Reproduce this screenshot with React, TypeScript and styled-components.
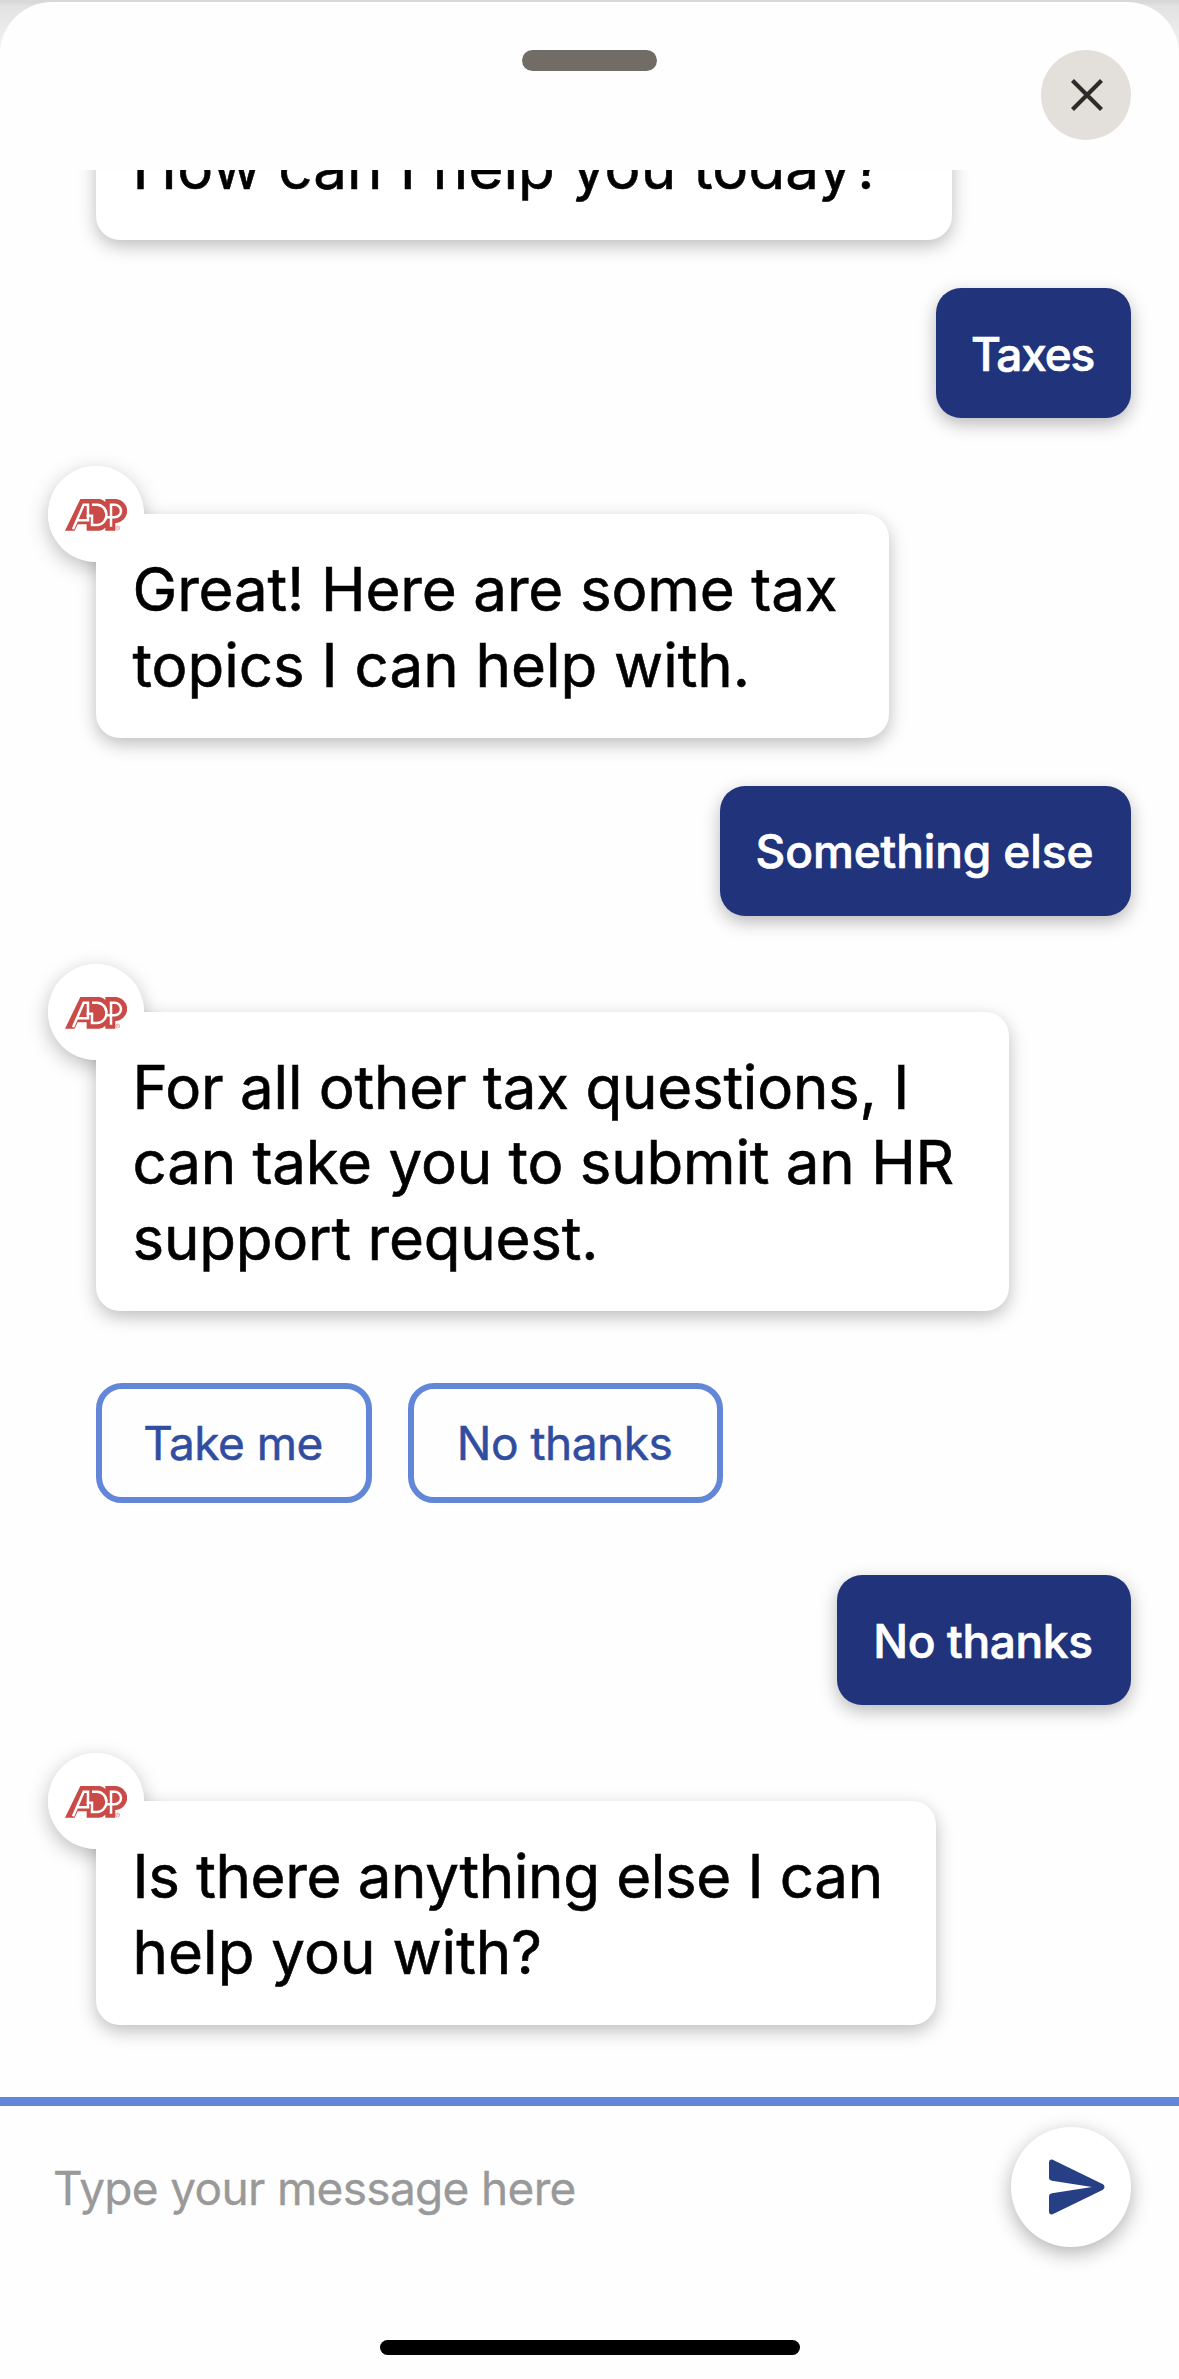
import React from 'react';
import styled, { createGlobalStyle } from 'styled-components';

const GlobalStyle = createGlobalStyle`
  *, *::before, *::after { box-sizing: border-box; }
  body { margin: 0; background: #fefefe; }
  button, input { font: inherit; margin: 0; }
`;

const Screen = styled.div`
  width: 1179px;
  height: 2379px;
  padding-top: 2px;
  overflow: hidden;
  background: linear-gradient(#d8d8d8 0, #d8d8d8 2px, #e2e2e2 6px, #f6f6f6 60px, #fefefe 90px);
  font-family: Inter, "Liberation Sans", sans-serif;
  color: #000;
`;

const Sheet = styled.main`
  display: flex;
  flex-direction: column;
  height: 2377px;
  border-radius: 52px 52px 0 0;
  background: #fefefe;
  overflow: hidden;
`;

const Header = styled.header`
  display: grid;
  grid-template-columns: 1fr 135px 1fr;
  align-items: start;
  flex: none;
  height: 168px;
  padding: 48px 48px 0;
`;

const Grabber = styled.div`
  grid-column: 2;
  height: 21px;
  border-radius: 11px;
  background: #716d66;
`;

const CloseButton = styled.button`
  display: flex;
  align-items: center;
  justify-content: center;
  justify-self: end;
  width: 90px;
  height: 90px;
  padding: 0 0 0 1px;
  border: 0;
  border-radius: 50%;
  background: #e3e0db;
`;

const Messages = styled.section`
  display: flex;
  flex-direction: column;
  justify-content: flex-end;
  flex: none;
  height: 1927px;
  padding: 0 48px 72px;
  overflow: hidden;
`;

const BotMessage = styled.div<{ $width: number }>`
  position: relative;
  align-self: flex-start;
  flex: none;
  width: ${(p) => p.$width}px;
  margin-left: 48px;
  padding: 38px 0 35px 36.5px;
  border-radius: 24px;
  background: #fff;
  box-shadow: 0 6px 18px rgba(0, 0, 0, 0.26);
`;

const AvatarShadow = styled.div`
  position: absolute;
  z-index: -1;
  top: -48px;
  left: -48px;
  width: 96px;
  height: 96px;
  border-radius: 50%;
  box-shadow: 0 6px 20px rgba(0, 0, 0, 0.26);
`;

const Avatar = styled.div`
  position: absolute;
  top: -48px;
  left: -48px;
  display: flex;
  align-items: center;
  justify-content: center;
  width: 96px;
  height: 96px;
  padding-top: 2px;
  border-radius: 50%;
  background: #fff;
`;

const BotGroup = styled.div`
  display: flex;
  flex: none;
  position: relative;
  z-index: 0;
  margin-top: 96px;
`;

const Line = styled.div<{ $spacing: number }>`
  font-size: 60px;
  line-height: 75.4px;
  letter-spacing: ${(p) => p.$spacing}px;
  white-space: nowrap;
  -webkit-text-stroke: 0.6px #000;
`;

const UserMessage = styled.div<{ $width: number; $top?: number; $spacing: number }>`
  display: flex;
  align-items: center;
  justify-content: center;
  align-self: flex-end;
  flex: none;
  width: ${(p) => p.$width}px;
  height: 130px;
  padding: 1px 2px 0 0;
  margin-top: ${(p) => p.$top ?? 48}px;
  border-radius: 25px;
  background: #20337b;
  box-shadow: 0 6px 18px rgba(0, 0, 0, 0.28);
  color: #fff;
  font-size: 46px;
  font-weight: 500;
  letter-spacing: ${(p) => p.$spacing}px;
  -webkit-text-stroke: 0.7px #fff;
`;

const Choices = styled.div`
  display: flex;
  flex: none;
  gap: 36px;
  margin: 72px 0 0 48px;
`;

const Choice = styled.button<{ $width: number }>`
  width: ${(p) => p.$width}px;
  height: 120px;
  padding: 0 2px 0 0;
  border: 6px solid #6286d8;
  border-radius: 26px;
  background: #fefefe;
  color: #304da0;
  font-size: 46px;
  letter-spacing: -0.5px;
  -webkit-text-stroke: 0.5px #304da0;
`;

const Composer = styled.form`
  display: flex;
  align-items: flex-start;
  justify-content: space-between;
  flex: none;
  height: 243px;
  padding: 21px 48px 0 53px;
  border-top: 9px solid #6286d8;
`;

const MessageInput = styled.input`
  width: 700px;
  height: 120px;
  padding: 1px 0 0;
  border: 0;
  outline: 0;
  background: transparent;
  font-size: 46px;
  letter-spacing: -0.67px;
  &::placeholder { color: #999; opacity: 1; -webkit-text-stroke: 0.3px #999; }
`;

const SendButton = styled.button`
  display: flex;
  align-items: center;
  justify-content: center;
  width: 120px;
  height: 120px;
  padding: 0 0 0 12px;
  border: 0;
  border-radius: 50%;
  background: #fff;
  box-shadow: 0 6px 20px rgba(0, 0, 0, 0.3);
`;

const HomeIndicator = styled.div`
  align-self: center;
  flex: none;
  width: 420px;
  height: 15px;
  border-radius: 8px;
  background: #000;
`;

function AdpLogo() {
  return (
    <svg width="62" height="32" viewBox="0 0 186 96">
      <path
        fill="#c94a47"
        d="M0 95 46 0h58q10 2 17 9V0h29a36 36 0 0 1 1 72v23h-30v-9q-8 9-19 9H65V76H38l-9 19Z"
      />
      <g fill="none" stroke="#fff" strokeWidth="7.500">
        <path d="M24 91 56 17h13v47H37" />
        <path d="M81 17h15a28 30 0 0 1 0 61H81V50H65" />
        <path d="M125 36h-6M138 83V17h11a19 19 0 0 1 0 38h-24" />
      </g>
      <circle cx="158" cy="87" r="6" fill="none" stroke="#d98a87" strokeWidth="2" />
      <path d="M156 90v-6h4l-2 3 2 3" fill="none" stroke="#d98a87" strokeWidth="1.5" />
    </svg>
  );
}

function BotBubble({ width, lines }: { width: number; lines: [string, number][] }) {
  return (
    <BotGroup>
      <BotMessage $width={width}>
        <AvatarShadow />
        <Avatar>
          <AdpLogo />
        </Avatar>
        {lines.map(([text, spacing]) => (
          <Line key={text} $spacing={spacing}>{text}</Line>
        ))}
      </BotMessage>
    </BotGroup>
  );
}

export default function App() {
  return (
    <>
      <GlobalStyle />
      <Screen>
        <Sheet>
          <Header>
            <Grabber />
            <CloseButton aria-label="Close">
              <svg width="34" height="34" viewBox="0 0 34 34">
                <path d="M2.5 2.5 31.5 31.5M31.5 2.5 2.5 31.5" stroke="#2d2a29" strokeWidth="4.200" fill="none" />
              </svg>
            </CloseButton>
          </Header>
          <Messages>
            <BotGroup>
              <BotMessage $width={856}>
                <Line $spacing={0.1}>How can I help you today?</Line>
              </BotMessage>
            </BotGroup>
            <UserMessage $width={195} $spacing={-1.2}>Taxes</UserMessage>
            <BotBubble
              width={793}
              lines={[['Great! Here are some tax', -0.13], ['topics I can help with.', 0]]}
            />
            <UserMessage $width={411} $spacing={-0.1}>Something else</UserMessage>
            <BotBubble
              width={913}
              lines={[
                ['For all other tax questions, I', -0.22],
                ['can take you to submit an HR', -0.21],
                ['support request.', -0.2],
              ]}
            />
            <Choices>
              <Choice $width={276}>Take me</Choice>
              <Choice $width={315}>No thanks</Choice>
            </Choices>
            <UserMessage $width={294} $top={72} $spacing={-0.35}>No thanks</UserMessage>
            <BotBubble
              width={840}
              lines={[['Is there anything else I can', -0.34], ['help you with?', 0.05]]}
            />
          </Messages>
          <Composer onSubmit={(e) => e.preventDefault()}>
            <MessageInput placeholder="Type your message here" />
            <SendButton aria-label="Send">
              <svg width="57" height="56" viewBox="0 0 57 56">
                <path
                  fill="#263f85"
                  d="M0 3.5C0 .8 2 0 4.200 .9L54 25.300Q57 28 54 30.700L4.200 55.100C2 56 0 55.200 0 52.500V37.500Q0 34.800 3 34.300L43 28 3 21.700Q0 21.200 0 18.500Z"
                />
              </svg>
            </SendButton>
          </Composer>
          <HomeIndicator />
        </Sheet>
      </Screen>
    </>
  );
}
